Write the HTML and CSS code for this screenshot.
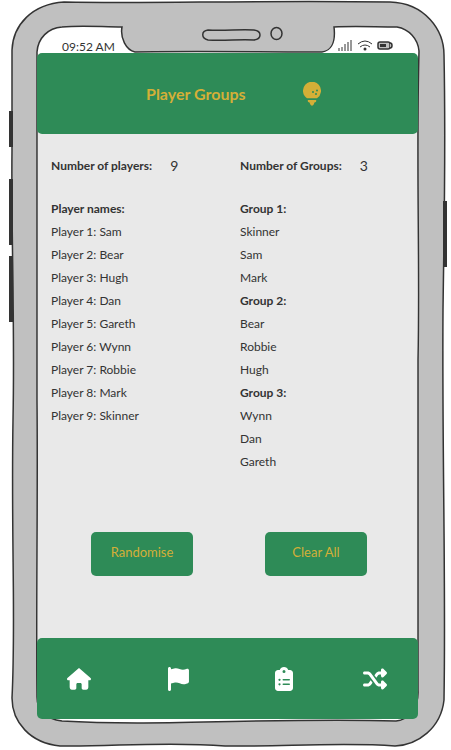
FILE: index.html
```html
<!DOCTYPE html>
<html lang="en">
<head>
<meta charset="utf-8">
<meta name="viewport" content="width=device-width, initial-scale=1">
<title>Player Groups</title>
<link rel="stylesheet" href="styles.css">
</head>
<body>
<div class="phone">
  <svg class="phone-frame" viewBox="0 0 451 750" preserveAspectRatio="none" aria-hidden="true">
    <path class="case" d="M64 2C150 4 250 0 390 2C425 3 444 30 444 55C446 150 444 230 443 310C442 450 446 580 444 700C441 728 418 745 395 746C340 742 280 747 225 746C165 741 110 747 60 746C30 743 12 722 12 698C16 620 11 540 13 420C15 320 11 230 12 150V50C13 25 32 4 64 2Z"/>
    <path class="screen" d="M62 27C82 25 102 27 122 27C120 38 126 50 135 52C190 51 260 52 322 52C330 51 336 44 334 27C355 26 375 27 397 27C409 29 418 39 419 51C416 160 420 260 418 360V690C419 706 409 720 396 721C280 717 160 727 62 721C45 719 37 709 37 697C36 600 38 500 37 400V52C38 38 48 28 62 27Z"/>
    <path class="page" d="M38 130H417V642H38Z"/>
    <path class="outline" d="M208 30C225 31 240 29 254 30C262 31 262 39 254 40C240 39 225 41 208 40C201 38 201 31 208 30Z"/>
    <ellipse class="outline" cx="276.500" cy="33.500" rx="5.500" ry="6"/>
    <path class="keys" d="M11 111V147M11 179V245M11 256V322M445 201V267"/>
  </svg>

  <div class="status">
    <time>09:52 AM</time>
    <svg class="status-icons" viewBox="0 0 56 14" aria-hidden="true">
      <path d="M1 12V9M4 12V8M7 12V5M10 12V3M13 12V1"/>
      <path d="M20 5Q27-1 34 5M22 8Q27 4 32 8"/>
      <circle class="solid" cx="27" cy="10" r="1.500"/>
      <rect class="battery" x="40" y="3" width="12" height="7" rx="2"/>
      <path class="battery" d="M52 4Q54 4 54 6.500Q54 9 52 9"/>
      <rect class="solid" x="42" y="5" width="6" height="3"/>
    </svg>
  </div>

  <header class="header">
    <h1>Player Groups</h1>
    <svg class="bulb" viewBox="0 0 18 24" role="img" aria-label="Golf ball">
      <path d="M4 16.200A9 9 0 1 1 14 16.200Z"/>
      <path d="M5 18H13Q14 20 11.500 20.500Q11 21 11 22Q9 25.500 7 22Q7 21 6.500 20.500Q4 20 5 18Z"/>
      <g class="dimples"><circle cx="14" cy="8.500" r="1"/><circle cx="10" cy="10" r="1"/><circle cx="13" cy="12" r="1"/></g>
    </svg>
  </header>

  <main class="main">
    <div class="columns counts">
      <p><strong>Number of players:</strong><span>9</span></p>
      <p><strong>Number of Groups:</strong><span>3</span></p>
    </div>
    <div class="columns lists">
      <section>
        <h2>Player names:</h2>
        <ul>
          <li>Player 1: Sam</li>
          <li>Player 2: Bear</li>
          <li>Player 3: Hugh</li>
          <li>Player 4: Dan</li>
          <li>Player 5: Gareth</li>
          <li>Player 6: Wynn</li>
          <li>Player 7: Robbie</li>
          <li>Player 8: Mark</li>
          <li>Player 9: Skinner</li>
        </ul>
      </section>
      <section>
        <h2>Group 1:</h2>
        <ul><li>Skinner</li><li>Sam</li><li>Mark</li></ul>
        <h2>Group 2:</h2>
        <ul><li>Bear</li><li>Robbie</li><li>Hugh</li></ul>
        <h2>Group 3:</h2>
        <ul><li>Wynn</li><li>Dan</li><li>Gareth</li></ul>
      </section>
    </div>
    <div class="actions">
      <button type="button">Randomise</button>
      <button type="button">Clear All</button>
    </div>
  </main>

  <nav class="nav" aria-label="Main">
    <a href="#home" aria-label="Home"><svg viewBox="0 0 576 512"><path d="M575.800 255.500c0 18-15 32.100-32 32.100h-32l.7 160.200c0 36-20 64.200-56 64.200H392c-22 0-40-18-40-40v-88c0-18-14-32-32-32h-64c-18 0-32 14-32 32v88c0 22-18 40-40 40h-64c-36 0-56-28-56-64V287.600H32c-18 0-32-14-32-32.100 0-9 3-17 10-24L266.400 8c7-7 15-8 22-8s15 2 21 7l255.400 224.500c8 7 12 15 11 24Z"/></svg></a>
    <a href="#course" aria-label="Course"><svg viewBox="0 0 512 512"><path d="M64 32C64 14 50 0 32 0S0 14 0 32v448c0 18 14 32 32 32s32-14 32-32V352l64-16c41-10 85-5 122 13 44 22 95 25 141 8l35-13c12-5 21-17 21-30V66c0-23-24-38-45-28l-10 5c-46 23-101 23-147 0-35-17-76-22-114-12L64 48Z"/></svg></a>
    <a href="#scores" aria-label="Scores"><svg viewBox="0 0 384 512"><path fill-rule="evenodd" d="M192 0c-42 0-77 27-91 64H64C29 64 0 93 0 128v320c0 35 29 64 64 64h256c35 0 64-29 64-64V128c0-35-29-64-64-64h-37C269 27 234 0 192 0Zm0 64a32 32 0 1 1 0 64 32 32 0 1 1 0-64ZM72 272a24 24 0 1 1 48 0 24 24 0 1 1-48 0Zm104-16h128c9 0 16 7 16 16s-7 16-16 16H176c-9 0-16-7-16-16s7-16 16-16ZM72 368a24 24 0 1 1 48 0 24 24 0 1 1-48 0Zm88 0c0-9 7-16 16-16h128c9 0 16 7 16 16s-7 16-16 16H176c-9 0-16-7-16-16Z"/></svg></a>
    <a href="#groups" aria-label="Groups"><svg viewBox="0 0 512 512"><path d="M403.800 34.400c12-5 25.700-2.200 34.900 6.900l64 64c6 6 9.400 14.100 9.400 22.600s-3.400 16.600-9.400 22.600l-64 64c-9.200 9.200-22.900 11.900-34.900 6.900S384 204.800 384 192v-32h-32c-10.100 0-19.600 4.700-25.600 12.800L284 229.300 244 176l31.200-41.600C293.300 110.200 321.800 96 352 96h32V64c0-12.900 7.800-24.600 19.800-29.600ZM164 282.700 204 336l-31.200 41.600C154.700 401.800 126.200 416 96 416H32c-17.700 0-32-14.300-32-32s14.300-32 32-32h64c10.100 0 19.600-4.700 25.600-12.800L164 282.700ZM438.600 470.600c-9.200 9.200-22.900 11.900-34.900 6.900S384 460.900 384 448v-32h-32c-30.200 0-58.700-14.200-76.800-38.400L121.600 172.800C115.600 164.700 106.100 160 96 160H32c-17.700 0-32-14.300-32-32s14.300-32 32-32h64c30.200 0 58.700 14.200 76.800 38.400l153.600 204.800c6 8.100 15.500 12.800 25.600 12.800h32v-32c0-12.900 7.800-24.600 19.800-29.600s25.700-2.200 34.900 6.900l64 64c6 6 9.400 14.100 9.400 22.600s-3.400 16.600-9.400 22.600l-64.100 64.100Z"/></svg></a>
  </nav>
</div>
</body>
</html>
```
FILE: styles.css
```css
* {
  box-sizing: border-box;
}

body {
  margin: 0;
  background: #fff;
  color: #333;
  font: 12px/23px Lato, "Open Sans", sans-serif;
}

h1, h2, p, ul {
  margin: 0;
  padding: 0;
  font-size: inherit;
}

ul {
  list-style: none;
}

.phone {
  position: relative;
  isolation: isolate;
  display: flex;
  flex-direction: column;
  min-height: 100vh;
  padding: 37px 33px 31px 37px;
}

.phone-frame {
  position: absolute;
  inset: 0;
  z-index: -1;
  width: 100%;
  height: 100%;
  fill: none;
  stroke: #333;
  stroke-width: 1.5px;
}

.case {
  fill: #c0c0c0;
}

.screen {
  fill: #fff;
}

.page {
  fill: #e9e9e9;
  stroke: none;
}

.keys {
  stroke-width: 4px;
}

.status {
  display: flex;
  justify-content: space-between;
  height: 16px;
  padding: 0 24px 0 25px;
  line-height: 20px;
}

.status-icons {
  width: 56px;
  height: 14px;
  margin-top: 2px;
  fill: none;
  stroke: #333;
}

.battery {
  fill: #c0c0c0;
  stroke-width: 1.5px;
}

.solid {
  fill: #333;
  stroke: none;
}

.header,
.nav {
  min-height: 81px;
  border-radius: 5px;
  background: #2e8b57;
}

.header {
  display: flex;
  align-items: center;
  gap: 57px;
  padding-left: 109px;
  color: #d4af37;
}

.header h1 {
  font-size: 16px;
}

.bulb {
  width: 18px;
  height: 24px;
  fill: #d4af37;
}

.dimples {
  fill: #2e8b57;
}

.main {
  display: flex;
  flex: 1;
  flex-direction: column;
  padding: 20px 0 62px;
}

.columns {
  display: grid;
  grid-template-columns: 1fr 1fr;
  gap: 11px;
  padding-left: 14px;
}

.counts p {
  display: flex;
  gap: 18px;
}

.counts span {
  font-size: 14px;
}

.lists {
  margin-top: 20px;
}

.actions {
  display: flex;
  justify-content: space-between;
  margin-top: auto;
  padding: 0 51px 0 54px;
}

button {
  width: 102px;
  height: 44px;
  padding: 0 0 4px;
  border: 0;
  border-radius: 5px;
  background: #2e8b57;
  color: #d4af37;
  font: inherit;
  font-size: 13px;
}

.nav {
  display: grid;
  grid-template-columns: 101fr 104fr 91fr 24px;
  align-items: center;
  padding: 0 31px 0 30px;
}

.nav a {
  display: flex;
}

.nav svg {
  width: 24px;
  height: 24px;
  fill: #fff;
}
```
